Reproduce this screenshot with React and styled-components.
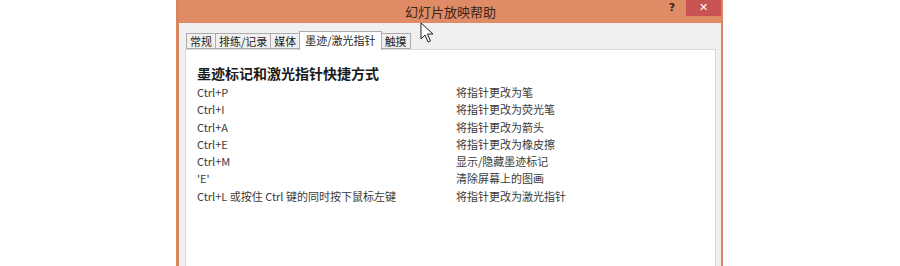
import styled, { createGlobalStyle } from "styled-components";

const GlobalStyle = createGlobalStyle`
  html, body {
    margin: 0;
    padding: 0;
    background: #ffffff;
    height: 266px;
    overflow: hidden;
  }
`;

const Page = styled.div`
  position: relative;
  height: 266px;
  padding-left: 176px;
  font-family: "Noto Sans CJK SC", "Microsoft YaHei", sans-serif;
`;

const Window = styled.div`
  width: 542px;
  height: 266px;
  display: flex;
  flex-direction: column;
  border-left: 3px solid #d98560;
  border-right: 2px solid #d98560;
  background: #f0f0f0;
`;

const TitleBar = styled.header`
  height: 23px;
  flex: none;
  background: #de8b66;
  display: flex;
  align-items: flex-start;
`;

const Title = styled.span`
  flex: 1;
  text-align: center;
  font-size: 13px;
  line-height: 24px;
  color: #3b2417;
  padding-left: 66px;
`;

const HelpButton = styled.span`
  width: 28px;
  height: 16px;
  margin-left: 2px;
  font-family: "DejaVu Sans", sans-serif;
  font-weight: bold;
  font-size: 11px;
  line-height: 16px;
  text-align: center;
  color: #3a2519;
`;

const CloseButton = styled.span`
  width: 35px;
  height: 16px;
  background: #c95352;
  color: #ffffff;
  font-family: "DejaVu Sans", sans-serif;
  font-weight: bold;
  font-size: 11px;
  line-height: 16px;
  text-align: center;
`;

const Client = styled.div`
  flex: 1;
  display: flex;
  flex-direction: column;
  padding: 7px 5px 0 6px;
`;

const TabRow = styled.div`
  display: flex;
  align-items: flex-end;
  height: 19px;
  padding-left: 2px;
  position: relative;
  z-index: 1;
`;

const Tab = styled.div`
  height: ${(p) => (p.$active ? "19px" : "16px")};
  margin-bottom: ${(p) => (p.$active ? "-1px" : "0")};
  box-sizing: border-box;
  padding: 0 ${(p) => (p.$active ? "5px" : "3px")};
  border: 1px solid #acacac;
  border-bottom: ${(p) => (p.$active ? "none" : "1px solid #acacac")};
  margin-left: -1px;
  background: ${(p) => (p.$active ? "#ffffff" : "#f0f0f0")};
  font-size: 11px;
  line-height: ${(p) => (p.$active ? "17px" : "14px")};
  color: #1e1e1e;
  white-space: nowrap;
`;

const Panel = styled.section`
  flex: 1;
  background: #ffffff;
  border: 1px solid #d9d9d9;
  border-bottom: none;
  padding: 12px 11px 0 11px;
`;

const Heading = styled.h2`
  margin: 0;
  font-size: 14px;
  font-weight: bold;
  line-height: 22px;
  color: #1a1a1a;
`;

const ShortcutList = styled.div`
  display: grid;
  grid-template-columns: 259px 1fr;
  grid-auto-rows: 17.3px;
  font-size: 11px;
  line-height: 17px;
  color: #3a3a3a;
`;

const Cell = styled.span`
  white-space: nowrap;
`;

const Cursor = styled.svg`
  position: absolute;
  left: 420px;
  top: 22px;
`;

const tabs = ["常规", "排练/记录", "媒体", "墨迹/激光指针", "触摸"];

const shortcuts = [
  ["Ctrl+P", "将指针更改为笔"],
  ["Ctrl+I", "将指针更改为荧光笔"],
  ["Ctrl+A", "将指针更改为箭头"],
  ["Ctrl+E", "将指针更改为橡皮擦"],
  ["Ctrl+M", "显示/隐藏墨迹标记"],
  ["'E'", "清除屏幕上的图画"],
  ["Ctrl+L 或按住 Ctrl 键的同时按下鼠标左键", "将指针更改为激光指针"],
];

function App() {
  return (
    <Page>
      <GlobalStyle />
      <Window>
        <TitleBar>
          <Title>幻灯片放映帮助</Title>
          <HelpButton>?</HelpButton>
          <CloseButton>✕</CloseButton>
        </TitleBar>
        <Client>
          <TabRow>
            {tabs.map((t, i) => (
              <Tab key={t} $active={i === 3}>
                {t}
              </Tab>
            ))}
          </TabRow>
          <Panel>
            <Heading>墨迹标记和激光指针快捷方式</Heading>
            <ShortcutList>
              {shortcuts.flatMap(([key, action]) => [
                <Cell key={key}>{key}</Cell>,
                <Cell key={action}>{action}</Cell>,
              ])}
            </ShortcutList>
          </Panel>
        </Client>
      </Window>
      <Cursor width="14" height="22" viewBox="0 0 14 22">
        <path
          d="M1 1 L1 17 L5 13 L8 20 L10.5 19 L7.5 12 L13 12 Z"
          fill="#ffffff"
          stroke="#222222"
          strokeWidth="1"
          strokeLinejoin="round"
        />
      </Cursor>
    </Page>
  );
}

export default App;
